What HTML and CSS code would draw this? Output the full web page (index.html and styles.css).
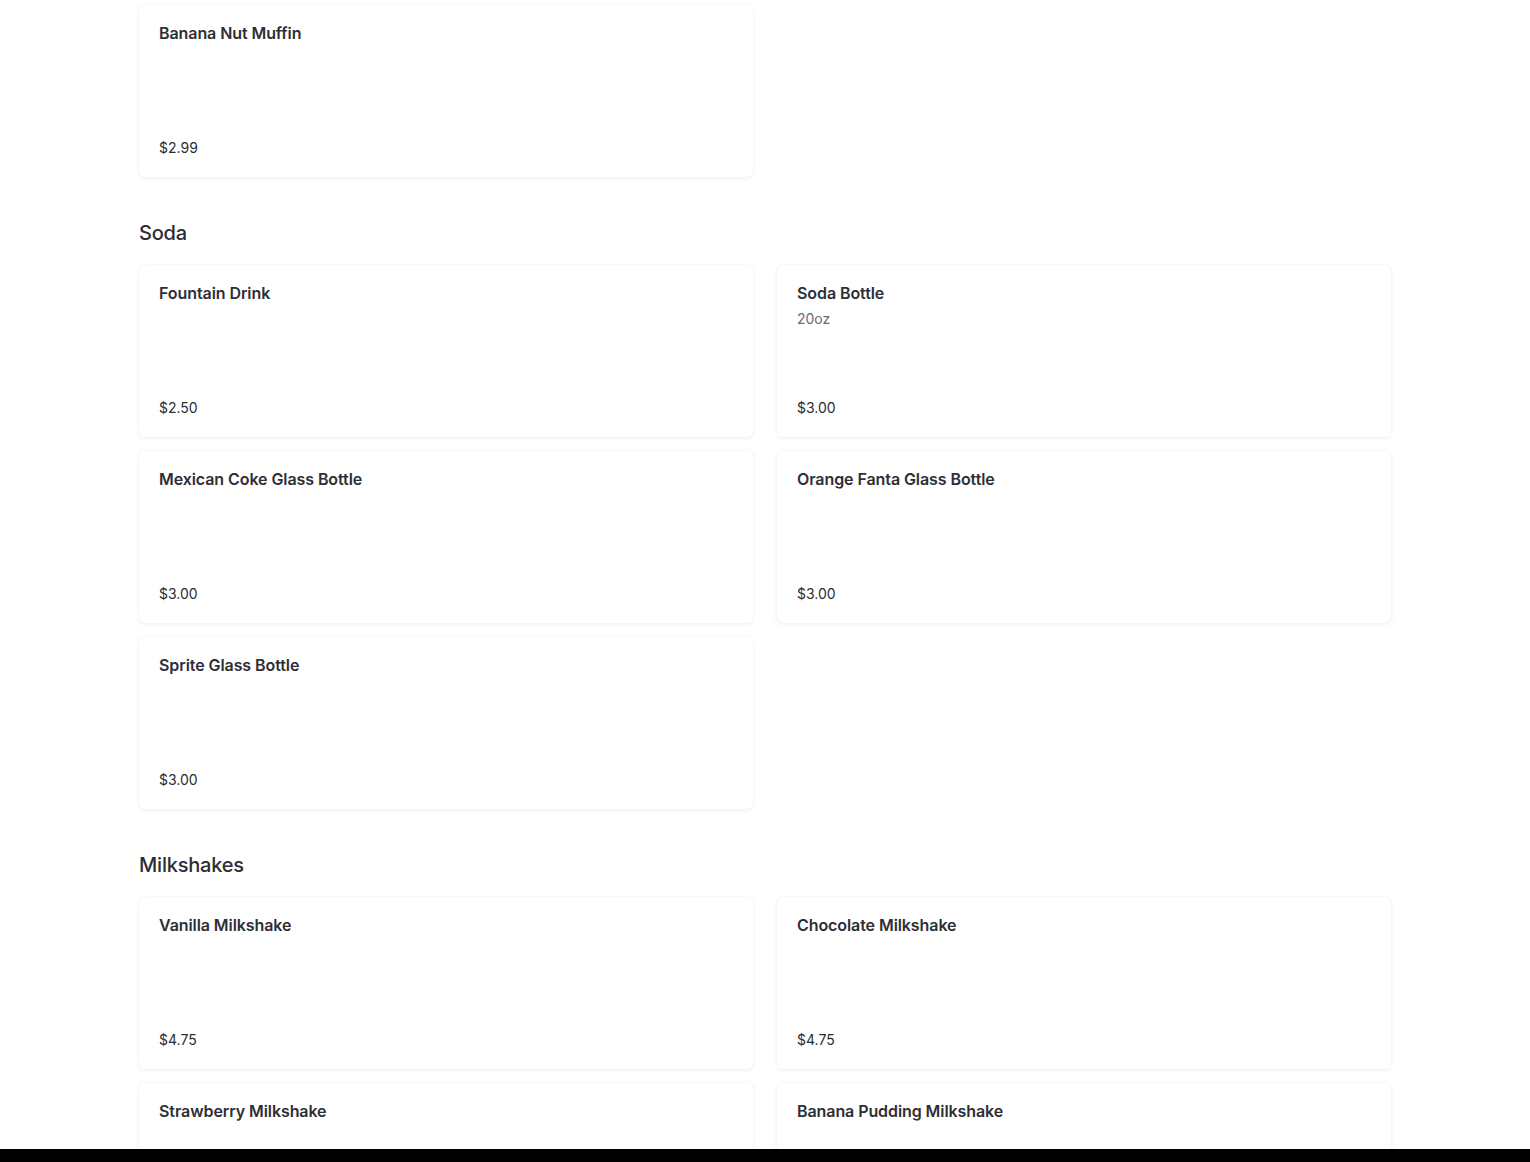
FILE: index.html
```html
<!DOCTYPE html>
<html lang="en">
<head>
<meta charset="utf-8">
<title>Menu</title>
<link rel="stylesheet" href="styles.css">
</head>
<body>
<main class="menu">
  <section class="category">
    <div class="grid">
      <article class="item"><div class="item-text"><h3 class="item-name">Banana Nut Muffin</h3></div><div class="item-price">$2.99</div></article>
    </div>
  </section>

  <section class="category">
    <h2 class="category-title">Soda</h2>
    <div class="grid">
      <article class="item"><div class="item-text"><h3 class="item-name">Fountain Drink</h3></div><div class="item-price">$2.50</div></article>
      <article class="item"><div class="item-text"><h3 class="item-name">Soda Bottle</h3><p class="item-desc">20oz</p></div><div class="item-price">$3.00</div></article>
      <article class="item"><div class="item-text"><h3 class="item-name">Mexican Coke Glass Bottle</h3></div><div class="item-price">$3.00</div></article>
      <article class="item"><div class="item-text"><h3 class="item-name">Orange Fanta Glass Bottle</h3></div><div class="item-price">$3.00</div></article>
      <article class="item"><div class="item-text"><h3 class="item-name">Sprite Glass Bottle</h3></div><div class="item-price">$3.00</div></article>
    </div>
  </section>

  <section class="category">
    <h2 class="category-title">Milkshakes</h2>
    <div class="grid">
      <article class="item"><div class="item-text"><h3 class="item-name">Vanilla Milkshake</h3></div><div class="item-price">$4.75</div></article>
      <article class="item"><div class="item-text"><h3 class="item-name">Chocolate Milkshake</h3></div><div class="item-price">$4.75</div></article>
      <article class="item"><div class="item-text"><h3 class="item-name">Strawberry Milkshake</h3></div><div class="item-price">$4.75</div></article>
      <article class="item"><div class="item-text"><h3 class="item-name">Banana Pudding Milkshake</h3></div><div class="item-price">$4.75</div></article>
    </div>
  </section>
</main>
<div class="bottom-bar"></div>
</body>
</html>
```

FILE: styles.css
```css
html, body {
  margin: 0;
  padding: 0;
  background: #ffffff;
  overflow: hidden;
  height: 1162px;
}

body {
  font-family: "Inter", "Liberation Sans", sans-serif;
  color: #2c2c33;
}

.menu {
  width: 1252px;
  margin: 0 auto;
  padding-top: 5px;
  display: flex;
  flex-direction: column;
  gap: 42px;
}

.category {
  display: flex;
  flex-direction: column;
  gap: 18px;
}

.category-title {
  margin: 0;
  font-size: 20px;
  line-height: 28px;
  font-weight: 500;
  letter-spacing: -0.01em;
  color: #2c2c33;
}

.grid {
  display: grid;
  grid-template-columns: 1fr 1fr;
  column-gap: 24px;
  row-gap: 14px;
}

.item {
  height: 172px;
  box-sizing: border-box;
  padding: 20px 20px 19px;
  background: #fff;
  border-radius: 6px;
  box-shadow: 0 0 1px rgba(0, 0, 0, 0.06), 0 1px 5px rgba(0, 0, 0, 0.07);
  display: flex;
  flex-direction: column;
  justify-content: space-between;
}

.item-text {
  display: flex;
  flex-direction: column;
  gap: 8px;
}

.item-name {
  margin: 0;
  font-size: 16px;
  line-height: 16px;
  font-weight: 600;
  letter-spacing: -0.005em;
  color: #2e2e35;
}

.item-desc {
  margin: 0;
  font-size: 14px;
  line-height: 20px;
  color: #6b6b70;
}

.item-price {
  font-size: 14px;
  line-height: 20px;
  color: #2c2c33;
}

.bottom-bar {
  position: fixed;
  left: 0;
  right: 0;
  bottom: 0;
  height: 13px;
  background: #000;
}
```
